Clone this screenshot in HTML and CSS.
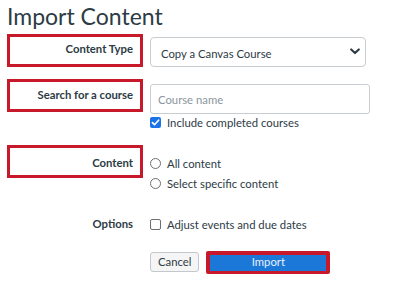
FILE: index.html
```html
<!DOCTYPE html>
<html lang="en">
<head>
<meta charset="utf-8">
<title>Import Content</title>
<link rel="stylesheet" href="styles.css">
</head>
<body>
<h1 class="title">Import Content</h1>
<div class="form">
  <div class="row row-type">
    <div class="label boxed pt1">Content Type</div>
    <div class="control">
      <div class="select">
        <span>Copy a Canvas Course</span>
        <svg class="chev" width="10" height="7" viewBox="0 0 10 7"><path d="M1.2 1.4 L5 5.1 L8.8 1.4" fill="none" stroke="#2d3b45" stroke-width="2.1" stroke-linecap="round" stroke-linejoin="round"/></svg>
      </div>
    </div>
  </div>
  <div class="row row-search">
    <div class="label boxed pt3">Search for a course</div>
    <div class="control ctl-search">
      <div class="input"><span class="placeholder">Course name</span></div>
      <div class="check-line">
        <span class="cbox checked"><svg width="11" height="11" viewBox="0 0 11 11"><path d="M2.4 5.6 L4.5 7.7 L8.6 3.2" fill="none" stroke="#fff" stroke-width="1.7" stroke-linecap="round" stroke-linejoin="round"/></svg></span>
        <span>Include completed courses</span>
      </div>
    </div>
  </div>
  <div class="row row-content">
    <div class="label boxed pt4">Content</div>
    <div class="control ctl-content">
      <div class="opt-line"><span class="radio"></span><span>All content</span></div>
      <div class="opt-line"><span class="radio"></span><span>Select specific content</span></div>
    </div>
  </div>
  <div class="row row-options">
    <div class="label plain">Options</div>
    <div class="control">
      <div class="opt-line"><span class="cbox"></span><span>Adjust events and due dates</span></div>
    </div>
  </div>
  <div class="row row-buttons">
    <div></div>
    <div class="control buttons">
      <button class="btn cancel" type="button">Cancel</button>
      <button class="btn import" type="button">Import</button>
    </div>
  </div>
</div>
</body>
</html>
```

FILE: styles.css
```css
html, body {
  margin: 0;
  background: #ffffff;
}
body {
  padding: 0 0 0 7px;
  font-family: Lato, "Noto Sans", sans-serif;
  color: #2d3b45;
  font-size: 11.3px;
}
.title {
  margin: 0 0 1px;
  font-size: 23px;
  font-weight: 400;
  line-height: 33px;
  color: #2d3b45;
}
.row {
  display: grid;
  grid-template-columns: 136px 236px;
  column-gap: 7px;
  align-items: start;
}
.label {
  box-sizing: border-box;
  text-align: right;
  font-weight: 700;
  line-height: 20px;
  white-space: nowrap;
}
.boxed {
  height: 33px;
  border: 3px solid #c8192a;
  padding-right: 7px;
}
.plain {
  padding-right: 10px;
}
.pt1 { padding-top: 2px; }
.pt3 { padding-top: 3px; }
.pt4 { padding-top: 5px; }

.row-search { margin-top: 12px; }
.row-content { margin-top: 14px; }
.row-options { margin-top: 21px; }
.row-buttons { margin-top: 17px; }

.select {
  box-sizing: border-box;
  margin-top: 3px;
  width: 216px;
  height: 30px;
  border: 1px solid #c7cdd1;
  border-radius: 4px;
  padding: 0 5px 0 10px;
  display: flex;
  align-items: center;
  justify-content: space-between;
  line-height: 20px;
  padding-top: 3px;
}
.chev { margin-top: -4px; }
.ctl-search { padding-top: 5px; }
.input {
  box-sizing: border-box;
  width: 220px;
  height: 30px;
  border: 1px solid #c7cdd1;
  border-radius: 3px;
  padding: 1px 7px 0;
  display: flex;
  align-items: center;
}
.placeholder { color: #8b969e; }
.check-line {
  display: flex;
  align-items: center;
  height: 17px;
  gap: 6px;
  line-height: 17px;
}
.cbox {
  box-sizing: border-box;
  width: 11px;
  height: 11px;
  border: 1px solid #6f6f6f;
  border-radius: 2px;
  display: inline-flex;
  flex: none;
  margin-left: 0;
}
.cbox.checked {
  background: #1a73e8;
  border-color: #1a73e8;
  border-width: 0;
}
.ctl-content { padding-top: 8px; }
.opt-line {
  display: flex;
  align-items: center;
  gap: 6px;
  height: 20px;
  line-height: 20px;
}
.opt-line > span:last-child { padding-top: 1px; }
.radio {
  box-sizing: border-box;
  width: 11px;
  height: 11px;
  border: 1px solid #6f6f6f;
  border-radius: 50%;
  flex: none;
}
.buttons {
  display: flex;
  align-items: flex-start;
  gap: 7px;
}
.btn {
  font-family: Lato, "Noto Sans", sans-serif;
  font-size: 11.3px;
  box-sizing: border-box;
  margin: 0;
  cursor: pointer;
}
.cancel {
  margin-top: 1px;
  height: 20px;
  padding: 0 7px;
  background: #f5f5f5;
  color: #2d3b45;
  border: 1px solid #c2c8cc;
  border-radius: 3px;
  line-height: 18px;
}
.import {
  width: 124px;
  height: 23px;
  padding: 0 0 2px;
  background: #1c78d8;
  color: #e8f1fc;
  border: 4px solid #c8192a;
  border-bottom-width: 3px;
  border-radius: 2px;
  line-height: 14px;
}
```
